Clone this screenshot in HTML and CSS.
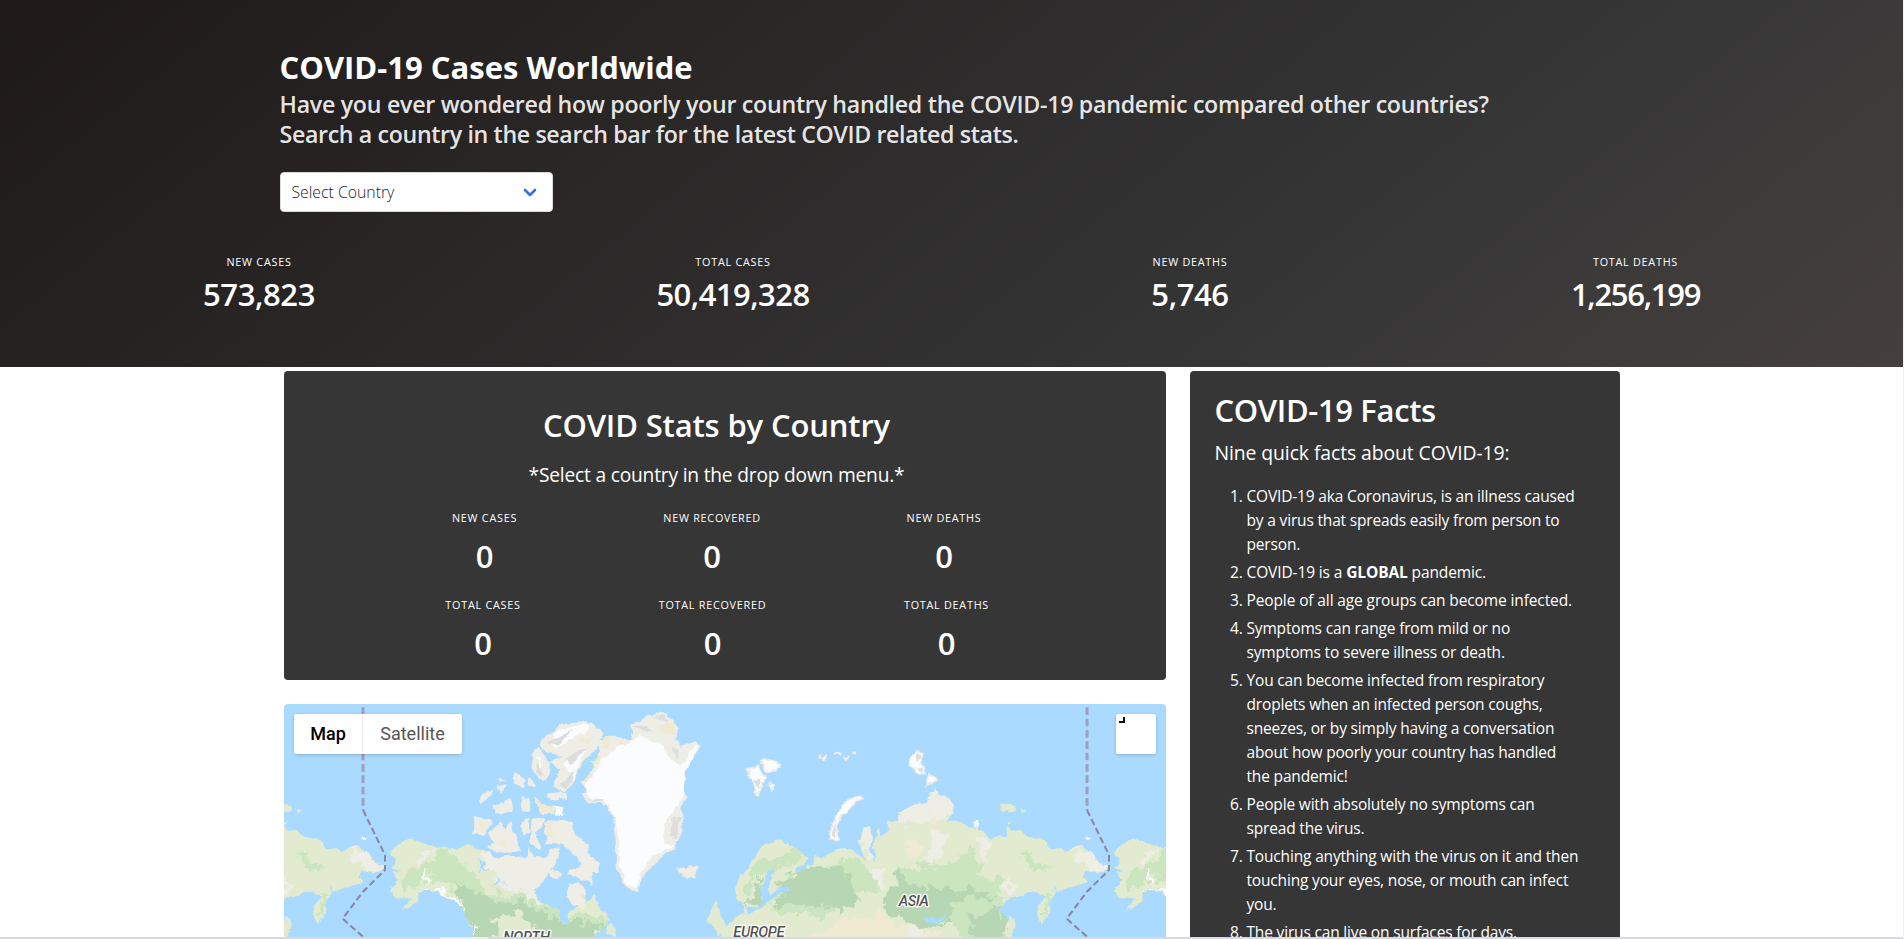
FILE: index.html
```html
<!DOCTYPE html>
<html lang="en">
<head>
<meta charset="utf-8">
<title>COVID-19 Cases Worldwide</title>
<link rel="stylesheet" href="styles.css">
</head>
<body>
<header class="hero">
  <div class="container hero-head">
    <h1 class="title">COVID-19 Cases Worldwide</h1>
    <h2 class="subtitle">Have you ever wondered how poorly your country handled the COVID-19 pandemic compared other countries?<br><span class="second">Search a country in the search bar for the latest COVID related stats.</span></h2>
    <div class="select"><span>Select Country</span>
      <svg class="chevron" width="14" height="10" viewBox="0 0 14 10"><path d="M2 2l5 5 5-5" fill="none" stroke="#3273dc" stroke-width="2.6" stroke-linecap="round" stroke-linejoin="round"/></svg>
    </div>
  </div>
  <div class="level">
    <div class="level-item item-a"><p class="heading">NEW CASES</p><p class="number">573,823</p></div>
    <div class="level-item item-b"><p class="heading">TOTAL CASES</p><p class="number num-b">50,419,328</p></div>
    <div class="level-item item-c"><p class="heading">NEW DEATHS</p><p class="number">5,746</p></div>
    <div class="level-item item-d"><p class="heading">TOTAL DEATHS</p><p class="number num-d">1,256,199</p></div>
  </div>
</header>
<main class="container main">
  <div class="left">
    <section class="card stats">
      <h2 class="card-title">COVID Stats by Country</h2>
      <p class="card-sub">*Select a country in the drop down menu.*</p>
      <div class="row row-new">
        <div class="cell"><p class="heading">NEW CASES</p><p class="zero">0</p></div>
        <div class="cell"><p class="heading">NEW RECOVERED</p><p class="zero">0</p></div>
        <div class="cell"><p class="heading">NEW DEATHS</p><p class="zero">0</p></div>
      </div>
      <div class="row row-total">
        <div class="cell"><p class="heading">TOTAL CASES</p><p class="zero">0</p></div>
        <div class="cell"><p class="heading">TOTAL RECOVERED</p><p class="zero">0</p></div>
        <div class="cell"><p class="heading">TOTAL DEATHS</p><p class="zero">0</p></div>
      </div>
    </section>
    <section class="map">
      <svg class="world" width="882" height="245" viewBox="42 42 2646 735">
        <defs>
          <filter id="rough" x="-5%" y="-5%" width="110%" height="110%"><feTurbulence type="fractalNoise" baseFrequency=".035" numOctaves="3" seed="4"/><feDisplacementMap in="SourceGraphic" scale="20" xChannelSelector="R" yChannelSelector="G"/></filter>
          <filter id="patch" x="-5%" y="-5%" width="110%" height="110%"><feTurbulence type="fractalNoise" baseFrequency=".03" numOctaves="4" seed="9"/><feDisplacementMap in="SourceGraphic" scale="60" xChannelSelector="R" yChannelSelector="G"/></filter>
          <path id="na" d="M360 490L385 460 425 445 460 462 545 478 565 482 595 462 610 475 660 485 670 505 720 500 770 505 780 475 795 500 830 505 840 480 865 475 870 500 845 530 820 570 795 600 800 625 830 640 865 660 875 700 895 700 893 670 922 650 895 630 895 585 930 580 946 600 945 640 975 612 990 655 1022 690 1018 708 980 730 950 790 620 790 605 715 590 680 575 655 540 625 500 608 470 597 448 610 440 640 390 662 425 625 375 625 360 600 385 570 365 545 395 540 358 532 382 512Z"/>
          <path id="asia" d="M45 590L60 560 85 530 105 500 125 470 150 458 180 448 200 462 235 480 262 505 255 525 230 528 225 550 245 545 262 530 280 515 285 492 300 510 330 490 370 475 400 480 425 500 440 520 428 495 420 460 430 415 450 415 455 440 450 480 465 520 462 460 470 415 480 440 500 425 505 395 535 390 535 370 580 345 625 335 630 305 650 298 655 315 690 325 702 350 690 380 680 395 720 395 740 408 770 410 800 435 812 450 830 435 860 435 865 412 905 425 920 440 975 450 985 475 1040 482 1075 465 1110 480 1130 510 1168 530 1150 550 1120 548 1100 542 1088 560 1100 575 1060 590 1005 605 1004 588 990 650 965 702 955 670 957 640 978 620 945 602 900 618 865 625 835 665 862 680 882 720 870 790 -10 790 10 710 45 685 70 670 66 645 50 625Z"/>
          <clipPath id="naClip"><use href="#na"/></clipPath>
          <clipPath id="asiaClip"><use href="#asia"/></clipPath>
          <g id="america" filter="url(#rough)">
            <use href="#na" class="land"/>
            <g clip-path="url(#naClip)"><g filter="url(#patch)">
              <path class="tundra" d="M630 475H900L880 520 820 640 740 610 690 590 655 540ZM890 570L960 580 940 660 885 660ZM545 540L600 550 615 600 580 600ZM450 480L520 478 430 520Z"/>
              <path class="grass" d="M400 550L540 480 610 560 660 610 760 620 900 680 1020 680 1000 720 700 720 560 600 480 560 400 610Z"/>
              <path class="forest" d="M550 580L610 600 700 640 780 640 860 690 1000 700 940 800 620 790 590 680Z"/>
              <path class="land" d="M670 680L760 670 800 720 790 790 680 790Z"/>
              <path class="ice" d="M440 610L500 585 580 650 560 655 500 605ZM600 700L625 705 620 725ZM465 540L475 560 450 590Z"/>
              <path class="water" d="M620 515L655 525 630 540ZM665 585L705 570 690 590Z"/>
            </g></g>
          </g>
          <g id="eurasia" filter="url(#rough)">
            <use href="#asia" class="land"/>
            <g clip-path="url(#asiaClip)"><g filter="url(#patch)">
              <path class="tundra" d="M525 350L640 280 720 330 690 385 600 400 530 390ZM640 430L690 430 660 510 610 530ZM425 410H455L450 500 425 490ZM780 440L810 450 790 540ZM1050 470L1170 520 1150 560 1070 510ZM440 540L500 550 480 590 440 580ZM860 550L890 600 860 600Z"/>
              <path class="grass" d="M100 520L220 480 260 500 160 540 60 620ZM380 500L440 530 480 600 420 610 370 640 300 680 150 660 200 560ZM530 540L700 520 750 460 790 560 850 560 840 640 870 760 740 760 690 680 500 630ZM890 480L1000 530 940 550ZM975 620L990 610 970 690Z"/>
              <path class="forest" d="M160 590L270 530 370 520 400 590 420 640 370 650 360 690 340 650 220 650 160 640 200 600ZM90 620L130 570 120 640 80 650ZM535 520L560 580 700 600 850 610 800 620 690 640 700 690 600 720 480 650 520 590ZM750 680L830 650 870 720 850 760 760 750Z"/>
              <path class="desert" d="M350 700L480 670 540 710 700 740 700 790 200 790ZM560 460H600V490H570ZM620 370L670 390 630 410Z"/>
              <path class="tundra" d="M560 720L620 725 600 790 560 770Z"/>
            </g></g>
            <path class="water" d="M120 600L150 535 168 543 150 575 145 610 200 588 216 600 160 620 140 640 108 662 80 672 78 655 110 652 128 635ZM610 680L650 690 680 662 675 680 650 702 618 695Z"/>
            <path class="land" d="M843 340L885 345 888 362 845 368ZM900 355L922 362 905 370ZM862 395L878 398 868 404ZM870 680L880 680 885 715 872 735Z"/>
            <path class="ice" d="M1096 440L1112 437 1108 450ZM760 392L778 394 776 412 762 406Z"/>
          </g>
        </defs>
        <rect class="water" x="42" y="42" width="2646" height="735"/>
        <use href="#eurasia" x="1350"/>
        <use href="#eurasia" x="-822"/>
        <use href="#america"/>
        <use href="#america" x="2172"/>
        <g filter="url(#rough)">
          <path class="tundra isle" d="M810 155L870 110 940 95 997 130 985 165 960 190 930 230 900 290 880 302 850 290 870 240 845 215 885 198 830 185ZM790 190L808 175 838 225 830 275 795 250 785 220ZM735 250L765 270 760 290 738 280ZM778 262L792 285 775 285ZM685 288L704 285 692 305ZM690 270H704L690 277ZM635 315L662 302 660 320 632 340ZM665 348L705 345 722 325 728 360 690 372ZM758 325H775V362H758ZM835 312L890 308 885 330 832 322ZM612 382L665 390 645 430 612 435ZM655 430L690 400 710 425 722 395 735 440 750 480 700 490 655 475 680 455ZM755 395L775 390 780 425 762 430ZM790 390H820L795 430 810 475 785 460ZM825 400L870 390 905 410 915 440 955 465 950 490 990 520 980 550 962 540 962 582 930 560 895 550 935 520 920 500 880 460 830 460ZM840 540L872 550 860 565 842 560ZM880 395L905 395 900 412Z"/>
          <path class="desert" d="M790 315L820 345 855 350 850 372 812 372ZM832 398L848 395 845 440 828 440ZM915 155L975 135 960 160ZM680 455L715 450 700 475ZM618 390L650 395 635 420Z"/>
          <path class="ice" d="M850 130L940 100 960 115 850 175ZM880 220L950 170 910 270ZM852 350H880V374H855ZM795 195L815 220 812 260Z"/>
          <path class="shade" d="M830 160L920 115 860 165ZM890 205L955 170 900 225ZM870 285L915 235 895 295ZM800 210L825 260 800 250Z"/>
          <path class="tundra" d="M930 280L965 250 975 215 990 190 985 160 1020 135 1080 150 1090 130 1080 105 1110 95 1130 72 1190 70 1200 85 1225 115 1225 130 1210 150 1235 170 1275 152 1295 168 1265 210 1245 240 1235 290 1250 320 1235 350 1240 420 1225 450 1215 470 1180 500 1130 540 1110 580 1100 608 1070 595 1050 560 1040 530 1035 470 1030 390 1010 345 950 335 935 310 965 305Z"/>
          <path class="desert" d="M1000 145L1025 135 1020 165 995 180ZM965 215L995 195 990 220ZM932 280L960 255 955 275ZM1165 105L1205 95 1225 128 1170 135ZM1040 165L1060 150 1055 180Z"/>
          <path class="ice" d="M945 290L980 240 1000 200 1050 170 1110 135 1180 165 1205 215 1235 225 1275 165 1285 172 1245 250 1240 320 1220 350 1190 390 1180 460 1210 465 1150 500 1110 550 1098 595 1070 585 1048 520 1045 440 1035 390 1015 338 960 322Z"/>
          <path class="shade" d="M1090 110L1130 105 1150 130 1130 125ZM1140 80L1190 78 1195 92ZM1205 170L1225 180 1225 215ZM1205 385L1230 380 1220 450 1200 445ZM950 325L1000 328 985 337ZM1110 560L1160 510 1130 540Z"/>
          <path class="tundra isle" d="M1225 535L1245 540 1260 527 1280 532 1276 555 1245 565 1228 552Z"/>
          <path class="land" d="M1310 690L1335 630 1365 700 1370 715 1345 740 1325 700ZM1015 715L1030 700 1040 735 1012 738Z"/>
        </g>
        <g transform="translate(1350)" filter="url(#rough)">
          <path class="ice isle" d="M82 235L100 232 118 225 122 250 138 262 125 285 113 320 100 280 88 262ZM122 215L145 210 178 222 172 242 140 245ZM145 285L160 288 152 300ZM292 205L298 195 296 208ZM305 205L322 195 316 212 305 214ZM342 190L362 192 355 198ZM373 200L387 195 380 208ZM398 185L407 183 405 194ZM575 195L590 178 606 195 600 220 615 230 618 258 595 250 570 232ZM628 252L650 265 640 278 618 285ZM330 430L345 385 365 345 420 318 430 325 390 350 362 385 350 420 357 450 335 447Z"/>
          <path class="shade" d="M100 275L125 265 115 295ZM590 235L612 235 610 252ZM335 430L350 395 345 440ZM590 185L602 200 590 215Z"/>
        </g>
        <g class="dateline">
          <path d="M279 52V360" class="dash-wide"/><path d="M279 360L345 495V540L279 605 218 686 290 750"/>
          <path d="M2451 52V360" class="dash-wide"/><path d="M2451 360L2517 495V540L2451 605 2390 686 2462 750"/>
        </g>
        <g class="labels">
          <text x="700" y="756" textLength="140">NORTH</text>
          <text x="1390" y="740" textLength="154">EUROPE</text>
          <text x="1886" y="648" textLength="91">ASIA</text>
        </g>
      </svg>
      <div class="map-type"><span class="type on">Map</span><span class="type">Satellite</span></div>
      <div class="fullscreen"><svg width="6" height="6" viewBox="0 0 6 6"><path d="M0 5H5V0" fill="none" stroke="#111" stroke-width="2"/></svg></div>
    </section>
  </div>
  <section class="card facts">
    <h2 class="card-title facts-title">COVID-19 Facts</h2>
    <p class="facts-sub">Nine quick facts about COVID-19:</p>
    <ol class="list">
      <li>COVID-19 aka Coronavirus, is an illness caused<br>by a virus that spreads easily from person to<br>person.</li>
      <li class="wide">COVID-19 is a <b>GLOBAL</b> pandemic.</li>
      <li class="wide">People of all age groups can become infected.</li>
      <li>Symptoms can range from mild or no<br>symptoms to severe illness or death.</li>
      <li>You can become infected from respiratory<br>droplets when an infected person coughs,<br>sneezes, or by simply having a conversation<br>about how poorly your country has handled<br>the pandemic!</li>
      <li>People with absolutely no symptoms can<br>spread the virus.</li>
      <li>Touching anything with the virus on it and then<br>touching your eyes, nose, or mouth can infect<br>you.</li>
      <li>The virus can live on surfaces for days.</li>
    </ol>
  </section>
</main>
<div class="strip"><div class="strip-thumb"></div></div>
</body>
</html>
```
FILE: styles.css
```css
* { box-sizing: border-box; margin: 0; padding: 0; }
html { background: #fff; }
body {
  height: 939px; overflow: hidden; display: flex; flex-direction: column;
  border-right: 1px solid #f1f1f1;
  font-family: "Open Sans", "Noto Sans", sans-serif; font-size: 15.5px; color: #fff;
}
.container { width: 1344px; margin: 0 auto; }
.hero {
  flex: none; height: 367px; padding-top: 49px;
  background: linear-gradient(141deg, #1f1919 0%, #363636 71%, #463f3f 100%);
}
.title { font-size: 31px; line-height: 36px; font-weight: 700; letter-spacing: 0; }
.subtitle {
  margin: 4px 0 23px; font-size: 23.2px; line-height: 30px; font-weight: 600;
  letter-spacing: -.28px; color: rgba(255,255,255,.9); white-space: nowrap;
}
.second { letter-spacing: -.36px; }
.select {
  width: 273px; height: 40px; padding: 0 15px 0 11px; border: 1px solid #dbdbdb; border-radius: 4px;
  background: #fff; color: #222; font-size: 15.8px; font-weight: 300;
  display: flex; align-items: center; justify-content: space-between;
}
.chevron { margin-top: 1px; }
.level { display: flex; padding: 0 32px; margin-top: 42px; }
.level-item { text-align: center; }
.item-a { width: 454px; }
.item-b { width: 494px; }
.item-c { width: 420px; }
.item-d { width: 471px; }
.heading { font-size: 10.8px; line-height: 16px; letter-spacing: .75px; font-weight: 500; }
.number, .zero { font-size: 31px; line-height: 36px; font-weight: 600; }
.number { margin-top: 6px; letter-spacing: -.4px; }
.num-b { letter-spacing: -.55px; }
.num-d { letter-spacing: -1.3px; }
.main { flex: 1; min-height: 0; overflow: hidden; display: flex; gap: 24px; padding: 4px 4px 0; }
.left { width: 882px; flex: none; display: flex; flex-direction: column; gap: 24px; }
.card { background: #363636; border-radius: 4px; }
.stats { height: 309px; flex: none; padding: 36px 16px 0 0; text-align: center; }
.card-title { font-size: 31px; line-height: 36px; font-weight: 600; letter-spacing: -.15px; }
.card-sub { margin-top: 20px; font-size: 19.2px; line-height: 24px; letter-spacing: -.2px; }
.row { display: flex; }
.row-new { margin: 23px 0 0 95px; }
.row-total { margin: 23px 0 0 93px; }
.row-new .cell:nth-child(1) { width: 212px; }
.row-new .cell:nth-child(2) { width: 243px; }
.row-new .cell:nth-child(3) { width: 221px; }
.row-total .cell:nth-child(1) { width: 213px; }
.row-total .cell:nth-child(2) { width: 246px; }
.row-total .cell:nth-child(3) { width: 222px; }
.zero { margin-top: 12px; }
.map { position: relative; height: 245px; flex: none; border-radius: 4px 4px 0 0; overflow: hidden; }
.world { display: block; }
.water { fill: #aadaff; }
.land { fill: #e2ebd0; }
.tundra { fill: #eeede6; }
.grass { fill: #cbe6bf; }
.forest { fill: #b7d7b4; }
.desert { fill: #f1ead2; }
.ice { fill: #fafcfe; }
.isle { stroke: #eeede6; stroke-width: 5; stroke-linejoin: round; }
.shade { fill: #dcdddd; }
.dateline { fill: none; stroke: #8d84a0; stroke-width: 6; stroke-dasharray: 20 10; }
.dash-wide { stroke: #a09fba; stroke-width: 9; stroke-dasharray: 23 11; }
.labels {
  font: italic 500 45px Roboto, sans-serif; fill: #505050;
  stroke: #fff; stroke-width: 8; stroke-linejoin: round; paint-order: stroke;
}
.map-type {
  position: absolute; left: 10px; top: 10px; height: 40px; display: flex; background: #fff;
  border-radius: 2px; box-shadow: 0 1px 4px -1px rgba(0,0,0,.3);
  font: 18px/40px Roboto, sans-serif; color: #565656;
}
.type { width: 99px; padding-left: 1px; text-align: center; }
.type.on { width: 69px; color: #000; font-weight: 500; border-right: 1px solid #eee; }
.fullscreen {
  position: absolute; right: 10px; top: 10px; width: 40px; height: 40px; padding: 3px; background: #fff;
  border-radius: 2px; box-shadow: 0 1px 4px -1px rgba(0,0,0,.3); line-height: 0;
}
.facts { width: 430px; height: 640px; padding: 21px 24px 0 25px; }
.facts-title { letter-spacing: -.35px; }
.facts-sub { margin-top: 13px; font-size: 19.4px; line-height: 24px; letter-spacing: -.1px; }
.list { margin: 19px 0 0 32px; line-height: 24px; letter-spacing: -.17px; white-space: nowrap; }
.list li + li { margin-top: 4px; }
.list .wide { letter-spacing: -.12px; }
.strip { flex: none; height: 2px; background: #d5dae6; padding-left: 440px; }
.strip-thumb { width: 48px; height: 2px; background: #eceef5; }
```
